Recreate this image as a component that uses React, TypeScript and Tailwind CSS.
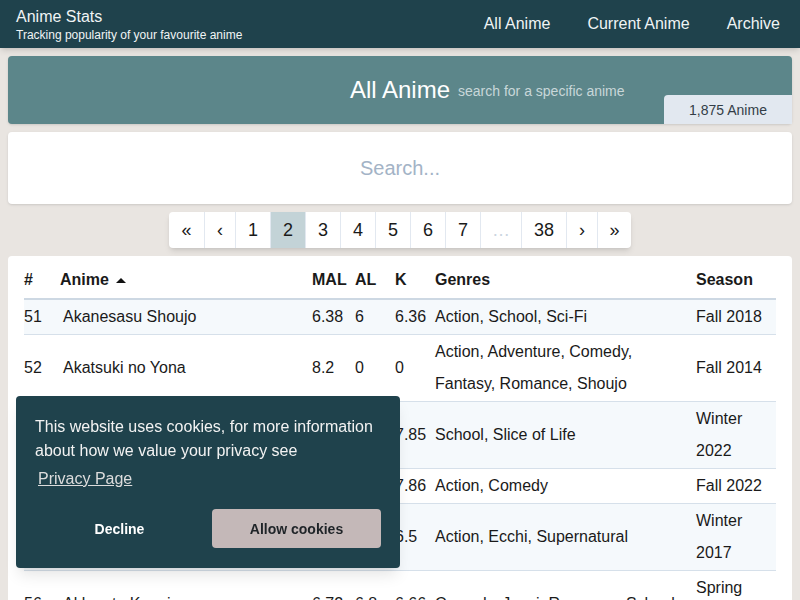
import { useState } from "react";

const rows = [
  { id: 51, name: "Akanesasu Shoujo", mal: "6.38", al: "6", k: "6.36", genres: "Action, School, Sci-Fi", season: "Fall 2018" },
  { id: 52, name: "Akatsuki no Yona", mal: "8.2", al: "0", k: "0", genres: "Action, Adventure, Comedy, Fantasy, Romance, Shoujo", season: "Fall 2014" },
  { id: 53, name: "Akebi-chan no Sailor-fuku", mal: "7.79", al: "7.8", k: "7.85", genres: "School, Slice of Life", season: "Winter 2022" },
  { id: 54, name: "Akiba Maid Sensou", mal: "7.83", al: "7.9", k: "7.86", genres: "Action, Comedy", season: "Fall 2022" },
  { id: 55, name: "Akiba's Trip The Animation", mal: "6.49", al: "6.4", k: "6.5", genres: "Action, Ecchi, Supernatural", season: "Winter 2017" },
  { id: 56, name: "Akkun to Kanojo", mal: "6.72", al: "6.8", k: "6.66", genres: "Comedy, Josei, Romance, School", season: "Spring 2018" },
];

// label + width class for each pagination cell
const pages = [
  { label: "«", cls: "w-[35px]" },
  { label: "‹", cls: "w-[31px] border-l" },
  { label: "1", cls: "w-[35px] border-l" },
  { label: "2", cls: "w-[35px] border-l bg-[#c3d3d7]" },
  { label: "3", cls: "w-[35px] border-l" },
  { label: "4", cls: "w-[35px] border-l" },
  { label: "5", cls: "w-[35px] border-l" },
  { label: "6", cls: "w-[35px] border-l" },
  { label: "7", cls: "w-[35px] border-l" },
  { label: "…", cls: "w-[41px] border-l text-[#cbd5e0]" },
  { label: "38", cls: "w-[45px] border-l" },
  { label: "›", cls: "w-[31px] border-l" },
  { label: "»", cls: "w-[34px] border-l" },
];

const App = () => {
  const [showCookies, setShowCookies] = useState(true);

  return (
    <div className="min-h-screen bg-[#e9e5e1] font-['Liberation_Sans',Arial,sans-serif] text-[#1a1a1a]">
      <header className="h-12 bg-[#1f424c] flex items-center justify-between pl-4 pr-5 shadow-md">
        <div className="flex flex-col text-[#f0f4f5] pt-px">
          <h1 className="text-base leading-5">Anime Stats</h1>
          <p className="text-xs leading-4">Tracking popularity of your favourite anime</p>
        </div>
        <nav className="flex gap-[37px] text-base text-[#f0f4f5] pl-0.5">
          <a href="#">All Anime</a>
          <a href="#">Current Anime</a>
          <a href="#">Archive</a>
        </nav>
      </header>

      <main className="flex flex-col gap-2 p-2">
        <div className="relative h-[68px] rounded bg-[#5c868a] shadow-sm flex items-center justify-center">
          <div className="relative text-white">
            <span className="text-2xl leading-8">All Anime</span>
            <span className="absolute left-full bottom-[5px] ml-2 whitespace-nowrap text-sm text-[#c8d7d9]">
              search for a specific anime
            </span>
          </div>
          <div className="absolute right-0 bottom-0 w-32 h-[29px] rounded-tl bg-[#e2e8f0] text-sm text-[#333d47] flex items-center justify-center">
            1,875 Anime
          </div>
        </div>

        <div className="h-[72px] rounded bg-white shadow-sm flex items-center justify-center">
          <input
            className="w-full text-center text-xl outline-none placeholder:text-[#a3b3c6]"
            placeholder="Search..."
          />
        </div>

        <div className="flex justify-center">
          <div className="flex h-9 rounded bg-white shadow-md overflow-hidden">
            {pages.map((p, i) => (
              <div
                key={i}
                className={"flex items-center justify-center text-lg border-[#e2e8f0] " + p.cls}
              >
                {p.label}
              </div>
            ))}
          </div>
        </div>

        <div className="rounded bg-white px-4 pb-4">
          <table className="w-full table-fixed text-base">
            <colgroup>
              <col className="w-[36px]" />
              <col className="w-[252px]" />
              <col className="w-[43px]" />
              <col className="w-[40px]" />
              <col className="w-[40px]" />
              <col className="w-[261px]" />
              <col className="w-[80px]" />
            </colgroup>
            <thead>
              <tr className="border-b-2 border-[#cdd8e3] text-left">
                <th className="pt-3 pb-[6px] leading-6 font-bold">#</th>
                <th className="pt-3 pb-[6px] leading-6 font-bold">
                  <span className="inline-flex items-center">
                    Anime
                    <svg width="10" height="5" viewBox="0 0 10 5" className="ml-[7px]">
                      <path d="M0 5 L5 0 L10 5 Z" fill="#111" />
                    </svg>
                  </span>
                </th>
                <th className="pt-3 pb-[6px] leading-6 font-bold">MAL</th>
                <th className="pt-3 pb-[6px] leading-6 font-bold">AL</th>
                <th className="pt-3 pb-[6px] leading-6 font-bold">K</th>
                <th className="pt-3 pb-[6px] leading-6 font-bold">Genres</th>
                <th className="pt-3 pb-[6px] leading-6 font-bold">Season</th>
              </tr>
            </thead>
            <tbody>
              {rows.map((r, i) => (
                <tr key={r.id} className={"border-b border-[#d6e0ea] " + (i % 2 === 0 ? "bg-[#f5f9fc]" : "bg-white")}>
                  <td className="py-px leading-8 align-middle">{r.id}</td>
                  <td className="py-px pl-[3px] leading-8 align-middle">{r.name}</td>
                  <td className="py-px leading-8 align-middle">{r.mal}</td>
                  <td className="py-px leading-8 align-middle">{r.al}</td>
                  <td className="py-px leading-8 align-middle">{r.k}</td>
                  <td className="py-px leading-8 align-middle">{r.genres}</td>
                  <td className="py-px leading-8 align-middle">{r.season}</td>
                </tr>
              ))}
            </tbody>
          </table>
        </div>
      </main>

      {showCookies && (
        <div className="fixed left-4 bottom-8 w-[384px] rounded bg-[#1f424c] px-[19px] pt-[19px] pb-5 text-white shadow-lg">
          <p className="text-base leading-6 text-[#f2f2f2]">
            This website uses cookies, for more information about how we value your privacy see
          </p>
          <a href="#" className="mt-1 inline-block px-[3px] text-base leading-6 text-[#dcdcdc] underline">
            Privacy Page
          </a>
          <div className="mt-[18px] flex gap-2">
            <button
              onClick={() => setShowCookies(false)}
              className="flex-1 h-[39px] text-sm font-bold text-white"
            >
              Decline
            </button>
            <button
              onClick={() => setShowCookies(false)}
              className="flex-1 h-[39px] rounded bg-[#c4b8b8] text-sm font-bold text-[#1f2428]"
            >
              Allow cookies
            </button>
          </div>
        </div>
      )}
    </div>
  );
};

export default App;
